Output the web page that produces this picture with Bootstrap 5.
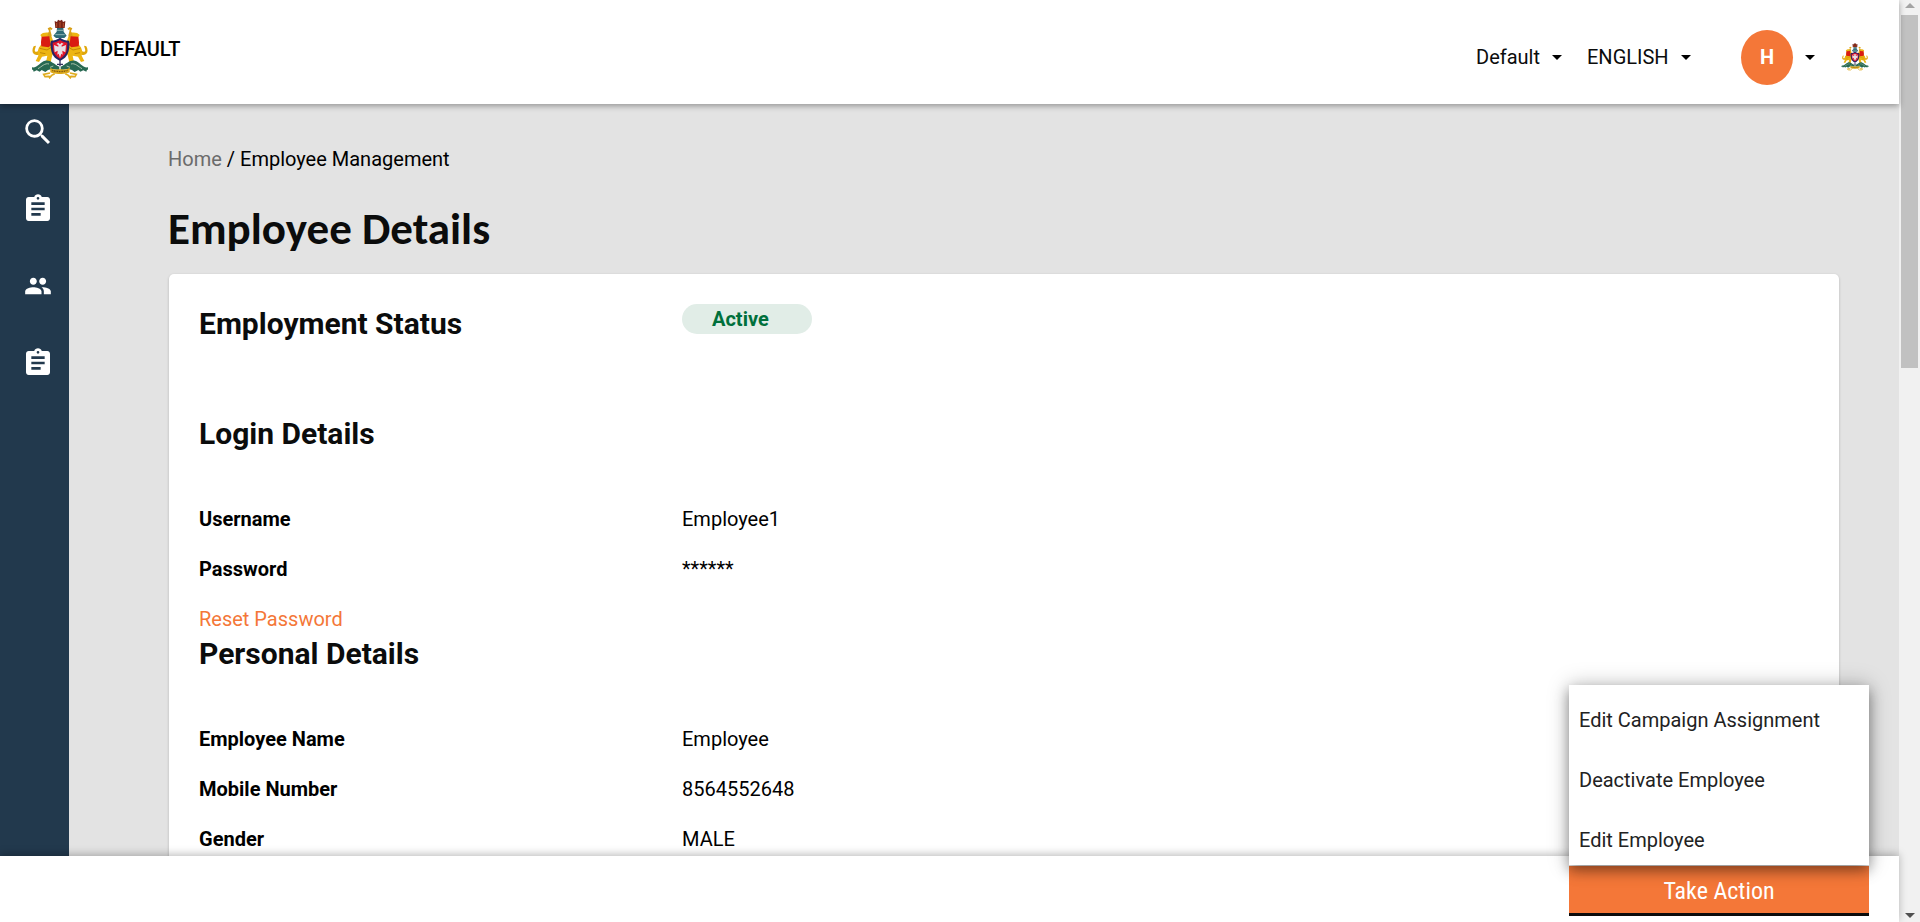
<!DOCTYPE html>
<html lang="en">
<head>
<meta charset="utf-8">
<meta name="viewport" content="width=device-width, initial-scale=1">
<title>Employee Details</title>
<link href="https://cdn.jsdelivr.net/npm/bootstrap@5.3.0/dist/css/bootstrap.min.css" rel="stylesheet">
<style>
  :root { --accent: #f47738; --ink: #0b0c0c; --navy: #22394d; }
  body { font: 400 20px/30px Roboto, sans-serif; color: #000; background: #e3e3e3; }
  .top-bar { height: 104px; padding: 0 30px 0 32px; z-index: 2; box-shadow: 0 2px 6px rgba(0,0,0,.35); }
  .brand { gap: 12px; padding-bottom: 6px; color: #000; font-weight: 500; }
  .emblem { width: 56px; height: 60px; }
  .emblem-sm { width: 28px; height: 28px; }
  .top-tools { padding-top: 10px; }
  .picker { appearance: none; border: 0; padding: 0 18px 0 0; background: url("data:image/svg+xml,%3Csvg xmlns='http://www.w3.org/2000/svg' width='10' height='5'%3E%3Cpath d='M0 0h10L5 5z'/%3E%3C/svg%3E") no-repeat right center; color: var(--ink); }
  .picker-city { width: 86px; margin-right: 25px; }
  .picker-lang { width: 104px; margin-right: 50px; }
  .avatar { width: 52px; height: 55px; background: var(--accent); font-weight: 700; }
  .caret { width: 10px; height: 5px; }
  .account-caret { margin: 0 26px 0 12px; }
  .side-nav { width: 69px; padding: 11px 0 0 21px; gap: 43px; background: var(--navy); }
  .side-nav a { width: 34px; height: 34px; color: #fff; }
  .page-main { padding: 40px 60px 0 100px; }
  .crumbs { margin: 0 0 30px -1px; }
  .crumbs a { color: #6b6b6b; }
  .page-title { font: 700 45px/50px Carlito, Lato, sans-serif; color: var(--ink); margin: 0 0 20px -1px; }
  .detail-card { border: 0; border-radius: 5px; padding: 30px; box-shadow: 0 1px 3px rgba(0,0,0,.2); }
  .section-title { font-size: 30px; line-height: 40px; font-weight: 700; color: var(--ink); margin: 0; }
  .detail-list { margin: 50px 0 0; }
  .detail-row { display: flex; margin-bottom: 20px; }
  .detail-key { width: 30%; font-weight: 700; }
  .status-row { margin-bottom: 70px; }
  .status-pill { width: 130px; padding-left: 30px; border-radius: 15px; background: #e1ede7; color: #00703c; font-weight: 700; }
  .reset-link { color: var(--accent); }
  .action-bar { padding: 10px 30px 6px; z-index: 2; box-shadow: 0 -2px 8px rgba(0,0,0,.25); }
  .action-wrap { width: 300px; }
  .action-btn { height: 50px; padding: 2px 0 0; border: 0; border-bottom: 3px solid var(--ink); background: var(--accent); color: #fff; font: 400 24px/40px "Roboto Condensed", "Liberation Sans Narrow", Roboto, sans-serif; }
  .action-menu { bottom: 100%; margin-bottom: 1px; box-shadow: 0 0 20px rgba(0,0,0,.25), 0 6px 12px rgba(0,0,0,.35); }
  .action-menu button { border: 0; background: none; padding: 10px 10px 0; line-height: 50px; color: #222; }
  .scroll-rail { width: 21px; background: #f1f1f1; padding: 3px 2px 4px; }
  .scroll-thumb { width: 17px; height: 353px; background: #c1c1c1; margin-top: 7px; }
</style>
</head>
<body class="vh-100 d-flex overflow-hidden">
<svg class="d-none" aria-hidden="true">
  <symbol id="emblem" viewBox="0 0 168 180">
    <g id="lion-side">
      <path d="M20 107C2 112-3 96 5 82l7-2-3 10c-3 9 4 11 11 5z" fill="#e0a70b"/>
      <path d="M55 42c-12-3-25-1-30 6l5 8c-1 10-1 16-4 23-8 9-11 20-7 31l-8 16 10 3 9-16 16-3-4 19 14 1 5-22 8-9-3-26z" fill="#edb512"/>
      <path d="M46 50l5-14-4-8 8-4 7 5-4 4-3-2 1 7 3 11-5 9z" fill="#d9a018"/>
      <path d="M29 53l23-1 4 27-6 6-22-3-1-12z" fill="#d91b12"/>
      <path d="M23 88l22 5 13-8M24 101l16 3" fill="none" stroke="#c38705" stroke-width="3"/>
      <path d="M0 145c16 3 25-17 39-20 15-4 25 9 43 18v10c-17-2-25-4-34 0l-8 6-11-6-6 5-9-4-9 4-2-6-8 1z" fill="#286952"/>
      <path d="M18 149c11-6 21-18 33-14M54 145l10-4" fill="none" stroke="#a9c3ad" stroke-width="3"/>
      <path d="M55 146c9 6 19 6 29 5v14c-12 1-20-2-29-5z" fill="#dda91b"/>
      <path d="M54 162l-19 4 4 7 12-1 2 4 6-7 9-5" fill="none" stroke="#dfac20" stroke-width="5"/>
    </g>
    <use href="#lion-side" transform="matrix(-1 0 0 1 168 0)"/>
    <path d="M68 6l7 3 3-7 6 3 6-3 3 7 7-3-2 21H70z" fill="#782216"/>
    <path d="M74 12v13M84 9v17M94 12v13" stroke="#b6532c" stroke-width="3"/>
    <path d="M75 27h19l1 11 9 12-7 7H72l-8-7 10-12z" fill="#2d6a77"/>
    <path d="M75 34h18M70 47h28" stroke="#8cb5b3" stroke-width="3"/>
    <path d="M57 65c10 0 18-3 27-9 9 6 17 9 27 9l2 10c-3 24-3 38-29 51-26-13-26-27-29-51z" fill="#272563"/>
    <path d="M62 71c9-1 15-3 22-8 7 5 13 7 22 8-1 22-1 36-22 48-21-12-21-26-22-48z" fill="#df142a"/>
    <path d="M84 76l-5-5-6 4 6 3v5l-13-5 2 22 9-5-1 12 4-3 4 12 4-12 4 3-1-12 9 5 2-22-13 5v-5l6-3-6-4z" fill="#e6dfe6"/>
    <path d="M84 124v18M75 136h18" stroke="#34345f" stroke-width="4"/>
    <path d="M61 154c14 5 31 5 46 0" fill="none" stroke="#77520e" stroke-width="4" stroke-dasharray="3 2"/>
  </symbol>
  <symbol id="clipboard" viewBox="0 0 24 24"><path fill="currentColor" d="M19 3h-4.180C14.400 1.840 13.300 1 12 1c-1.300 0-2.400.84-2.820 2H5c-1.100 0-2 .9-2 2v14c0 1.100.9 2 2 2h14c1.100 0 2-.9 2-2V5c0-1.100-.9-2-2-2zm-7 0c.55 0 1 .45 1 1s-.45 1-1 1-1-.45-1-1 .45-1 1-1zm2 14H7v-2h7v2zm3-4H7v-2h10v2zm0-4H7V7h10v2z"/></symbol>
</svg>

<div class="d-flex flex-column flex-grow-1">
  <header class="top-bar d-flex flex-shrink-0 align-items-center justify-content-between bg-white position-relative">
    <a class="brand d-flex align-items-center text-decoration-none" href="#">
      <svg class="emblem" aria-hidden="true"><use href="#emblem"/></svg>
      <span>DEFAULT</span>
    </a>
    <div class="top-tools d-flex align-items-center">
      <select class="picker picker-city" aria-label="City"><option>Default</option></select>
      <select class="picker picker-lang" aria-label="Language"><option>ENGLISH</option></select>
      <button class="btn border-0 p-0 d-flex align-items-center" type="button" aria-label="Account menu">
        <span class="avatar rounded-circle text-white fs-5 d-flex align-items-center justify-content-center">H</span>
        <svg class="caret account-caret" viewBox="0 0 10 5" aria-hidden="true"><path d="M0 0h10L5 5z"/></svg>
      </button>
      <svg class="emblem-sm" aria-hidden="true"><use href="#emblem"/></svg>
    </div>
  </header>

  <div class="d-flex flex-grow-1 overflow-hidden">
    <nav class="side-nav d-flex flex-column flex-shrink-0" aria-label="Main">
      <a class="d-flex align-items-center justify-content-center" href="#" aria-label="Search"><svg width="34" height="34" viewBox="0 0 24 24"><path fill="currentColor" d="M15.500 14h-.79l-.28-.27A6.471 6.471 0 0 0 16 9.500 6.500 6.500 0 1 0 9.500 16c1.610 0 3.090-.59 4.230-1.570l.27.28v.79l5 4.990L20.490 19l-4.990-5zm-6 0C7.010 14 5 11.990 5 9.500S7.010 5 9.500 5 14 7.010 14 9.500 11.990 14 9.500 14z"/></svg></a>
      <a class="d-flex align-items-center justify-content-center" href="#" aria-label="Campaigns"><svg width="32" height="32"><use href="#clipboard"/></svg></a>
      <a class="d-flex align-items-center justify-content-center" href="#" aria-label="Employees"><svg width="28" height="28" viewBox="0 0 24 24"><path fill="currentColor" d="M16 11c1.660 0 2.990-1.340 2.990-3S17.660 5 16 5s-3 1.340-3 3 1.340 3 3 3zm-8 0c1.660 0 2.990-1.340 2.990-3S9.660 5 8 5 5 6.340 5 8s1.340 3 3 3zm0 2c-2.330 0-7 1.170-7 3.500V19h14v-2.500c0-2.330-4.670-3.500-7-3.500zm8 0c-.29 0-.62.02-.97.05 1.160.84 1.970 1.970 1.970 3.450V19h6v-2.500c0-2.330-4.670-3.500-7-3.500z"/></svg></a>
      <a class="d-flex align-items-center justify-content-center" href="#" aria-label="Reports"><svg width="32" height="32"><use href="#clipboard"/></svg></a>
    </nav>

    <main class="page-main flex-grow-1">
      <nav class="crumbs" aria-label="Breadcrumb"><a class="text-decoration-none" href="#">Home</a> / <span>Employee Management</span></nav>
      <h1 class="page-title">Employee Details</h1>
      <section class="card detail-card">
        <div class="status-row d-flex align-items-start">
          <h2 class="section-title detail-key">Employment Status</h2>
          <span class="status-pill">Active</span>
        </div>
        <h2 class="section-title">Login Details</h2>
        <dl class="detail-list">
          <div class="detail-row"><dt class="detail-key">Username</dt><dd class="m-0">Employee1</dd></div>
          <div class="detail-row"><dt class="detail-key">Password</dt><dd class="m-0">******</dd></div>
        </dl>
        <a class="reset-link text-decoration-none align-self-start" href="#">Reset Password</a>
        <h2 class="section-title">Personal Details</h2>
        <dl class="detail-list">
          <div class="detail-row"><dt class="detail-key">Employee Name</dt><dd class="m-0">Employee</dd></div>
          <div class="detail-row"><dt class="detail-key">Mobile Number</dt><dd class="m-0">8564552648</dd></div>
          <div class="detail-row"><dt class="detail-key">Gender</dt><dd class="m-0">MALE</dd></div>
        </dl>
      </section>
    </main>
  </div>

  <footer class="action-bar d-flex flex-shrink-0 justify-content-end bg-white position-relative">
    <div class="action-wrap position-relative">
      <button class="action-btn w-100" type="button" aria-expanded="true">Take Action</button>
      <div class="action-menu position-absolute start-0 w-100 bg-white d-flex flex-column">
        <button class="text-start" type="button">Edit Campaign Assignment</button>
        <button class="text-start" type="button">Deactivate Employee</button>
        <button class="text-start" type="button">Edit Employee</button>
      </div>
    </div>
  </footer>
</div>

<div class="scroll-rail d-flex flex-column align-items-center flex-shrink-0" aria-hidden="true">
  <svg class="caret flex-shrink-0" viewBox="0 0 10 5"><path fill="#a3a3a3" d="M0 5h10L5 0z"/></svg>
  <div class="scroll-thumb"></div>
  <svg class="caret mt-auto flex-shrink-0" viewBox="0 0 10 5"><path fill="#505050" d="M0 0h10L5 5z"/></svg>
</div>
<script src="https://cdn.jsdelivr.net/npm/bootstrap@5.3.0/dist/js/bootstrap.bundle.min.js"></script>
</body>
</html>
